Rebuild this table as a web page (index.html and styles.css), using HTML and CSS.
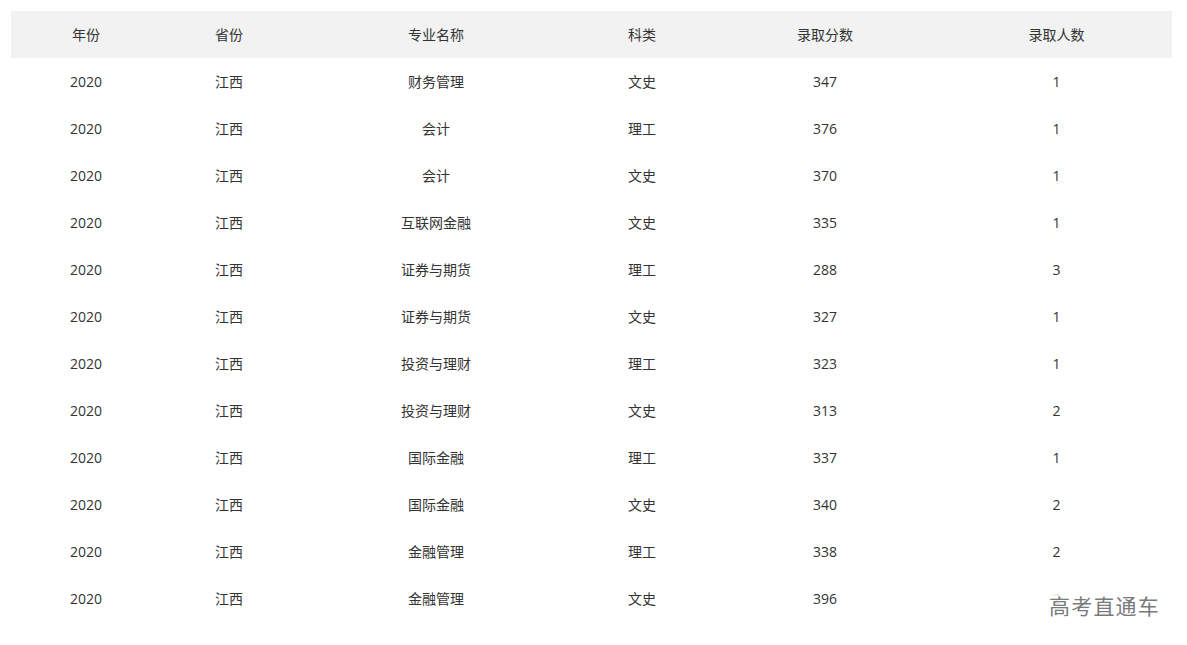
FILE: index.html
```html
<!DOCTYPE html>
<html lang="zh-CN">
<head>
<meta charset="utf-8">
<title>录取分数</title>
<link rel="stylesheet" href="styles.css">
</head>
<body>
<div class="page">
<table class="score-table">
  <colgroup>
    <col class="c1"><col class="c2"><col class="c3"><col class="c4"><col class="c5"><col class="c6">
  </colgroup>
  <thead>
    <tr><th>年份</th><th>省份</th><th>专业名称</th><th>科类</th><th>录取分数</th><th>录取人数</th></tr>
  </thead>
  <tbody>
    <tr><td>2020</td><td>江西</td><td>财务管理</td><td>文史</td><td>347</td><td>1</td></tr>
    <tr><td>2020</td><td>江西</td><td>会计</td><td>理工</td><td>376</td><td>1</td></tr>
    <tr><td>2020</td><td>江西</td><td>会计</td><td>文史</td><td>370</td><td>1</td></tr>
    <tr><td>2020</td><td>江西</td><td>互联网金融</td><td>文史</td><td>335</td><td>1</td></tr>
    <tr><td>2020</td><td>江西</td><td>证券与期货</td><td>理工</td><td>288</td><td>3</td></tr>
    <tr><td>2020</td><td>江西</td><td>证券与期货</td><td>文史</td><td>327</td><td>1</td></tr>
    <tr><td>2020</td><td>江西</td><td>投资与理财</td><td>理工</td><td>323</td><td>1</td></tr>
    <tr><td>2020</td><td>江西</td><td>投资与理财</td><td>文史</td><td>313</td><td>2</td></tr>
    <tr><td>2020</td><td>江西</td><td>国际金融</td><td>理工</td><td>337</td><td>1</td></tr>
    <tr><td>2020</td><td>江西</td><td>国际金融</td><td>文史</td><td>340</td><td>2</td></tr>
    <tr><td>2020</td><td>江西</td><td>金融管理</td><td>理工</td><td>338</td><td>2</td></tr>
    <tr><td>2020</td><td>江西</td><td>金融管理</td><td>文史</td><td>396</td><td>2</td></tr>
  </tbody>
</table>
<div class="watermark">高考直通车</div>
</div>
</body>
</html>
```
FILE: styles.css
```css
html, body {
  margin: 0;
  padding: 0;
  background: #fff;
}
body {
  font-family: "Open Sans", "Noto Sans CJK SC", sans-serif;
  color: #333;
  font-size: 14px;
  overflow: hidden;
}
.page {
  position: relative;
  padding: 11px 15px 0 11px;
  height: 634px;
}
.score-table {
  width: 1161px;
  border-collapse: collapse;
  table-layout: fixed;
}
.c1 { width: 150px; }
.c2 { width: 136px; }
.c3 { width: 278px; }
.c4 { width: 134px; }
.c5 { width: 232px; }
.c6 { width: 231px; }
.score-table th,
.score-table td {
  height: 47px;
  padding: 0;
  text-align: center;
  vertical-align: middle;
  font-weight: normal;
  line-height: 20px;
}
.score-table thead tr {
  background: #f2f2f2;
}
.watermark {
  position: absolute;
  left: 1049px;
  top: 592px;
  font-family: "Noto Sans CJK SC", sans-serif;
  font-size: 21px;
  line-height: 26px;
  color: #7a7a7a;
  background: rgba(255,255,255,0.85);
  letter-spacing: 1.2px;
}
```
